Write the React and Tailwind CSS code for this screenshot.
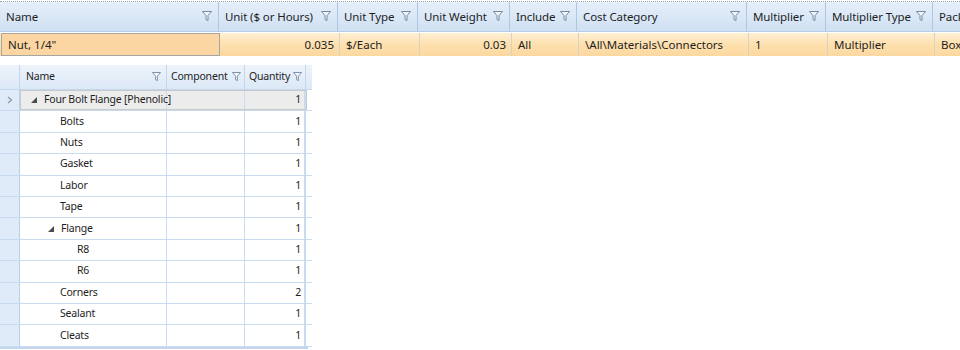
import React from 'react';

const Funnel = ({ small = false }) => (
  <svg width={small ? 9 : 10} height={small ? 10 : 11} viewBox="0 0 10 11" className="shrink-0">
    <path d="M0.5 0.5 H9.5 L6 4.5 V9.5 L4 8.5 V4.5 Z" fill="#f4f8fc" stroke="#7488a3" strokeWidth="1" strokeLinejoin="round" />
  </svg>
);

const Expander = () => (
  <svg width="6" height="6" viewBox="0 0 6 6">
    <polygon points="6,0 6,6 0,6" fill="#4a4a4a" />
  </svg>
);

const topCols = [
  { name: 'Name', w: 'w-[219px]', value: 'Nut, 1/4"' },
  { name: 'Unit ($ or Hours)', w: 'w-[119px]', value: '0.035', right: true },
  { name: 'Unit Type', w: 'w-[80px]', value: '$/Each' },
  { name: 'Unit Weight', w: 'w-[92px]', value: '0.03', right: true },
  { name: 'Include', w: 'w-[67px]', value: 'All' },
  { name: 'Cost Category', w: 'w-[170px]', value: '\\All\\Materials\\Connectors' },
  { name: 'Multiplier', w: 'w-[79px]', value: '1' },
  { name: 'Multiplier Type', w: 'w-[107px]', value: 'Multiplier' },
  { name: 'Package', w: 'w-[27px]', value: 'Box', noFilter: true },
];

const treeRows = [
  { name: 'Four Bolt Flange [Phenolic]', level: 0, expander: true, qty: 1, current: true },
  { name: 'Bolts', level: 1, qty: 1 },
  { name: 'Nuts', level: 1, qty: 1 },
  { name: 'Gasket', level: 1, qty: 1 },
  { name: 'Labor', level: 1, qty: 1 },
  { name: 'Tape', level: 1, qty: 1 },
  { name: 'Flange', level: 1, expander: true, qty: 1 },
  { name: 'R8', level: 2, qty: 1 },
  { name: 'R6', level: 2, qty: 1 },
  { name: 'Corners', level: 1, qty: 2 },
  { name: 'Sealant', level: 1, qty: 1 },
  { name: 'Cleats', level: 1, qty: 1 },
];

const indent = ['pl-[23px]', 'pl-[40px]', 'pl-[57px]'];
const expIndent = ['pl-[11px]', 'pl-[28px]', 'pl-[45px]'];

export default function App() {
  return (
    <div className="w-[960px] h-[350px] bg-white overflow-hidden text-[#1e1e1e]" style={{ fontFamily: '"Noto Sans", "Open Sans", sans-serif' }}>
      {/* Top grid */}
      <div className="border-t border-dotted border-[#9aa4b0] mt-[1px]">
        <div className="flex h-[30px] bg-gradient-to-b from-[#e6effa] to-[#cfe0f2] border-b border-[#b7cce6] text-[11.5px] tracking-[-0.1px] whitespace-nowrap">
          {topCols.map((c) => (
            <div key={c.name} className={`${c.w} shrink-0 flex items-center justify-between pl-[6px] pr-[6px] ${c.noFilter ? '' : 'border-r border-[#aec6e2]'} overflow-hidden`}>
              <span>{c.name}</span>
              {!c.noFilter && <Funnel />}
            </div>
          ))}
        </div>
        <div className="flex h-[23px] mt-[1px] bg-gradient-to-b from-[#fff0d4] via-[#fde0ae] to-[#fcd8a0] text-[11.5px] whitespace-nowrap">
          {topCols.map((c, i) => (
            <div
              key={c.name}
              className={`${c.w} shrink-0 flex items-center ${c.right ? 'justify-end pr-[5px]' : 'pl-[6px]'} ${i === 0 ? 'border border-[#a6a6a6] bg-[#fcd6a2] mx-[1px]' : 'border-r border-[#d9d2c4]'} overflow-hidden`}
            >
              {c.value}
            </div>
          ))}
        </div>
      </div>

      {/* Tree grid */}
      <div className="mt-[9px] w-[312px] text-[10.5px] tracking-[-0.2px] whitespace-nowrap">
        <div className="flex h-[25px] bg-gradient-to-b from-[#eef4fb] to-[#dbe8f6] border-b border-[#c3d6ee]">
          <div className="w-[20px] shrink-0 border-r border-[#c3d6ee]" />
          <div className="w-[147px] shrink-0 flex items-center justify-between pl-[6px] pr-[5px] border-r border-[#c3d6ee]">
            <span>Name</span>
            <Funnel small />
          </div>
          <div className="w-[78px] shrink-0 flex items-center justify-between pl-[4px] pr-[3px] border-r border-[#c3d6ee]">
            <span>Component</span>
            <Funnel small />
          </div>
          <div className="w-[61px] shrink-0 flex items-center justify-between pl-[4px] pr-[3px] border-r border-[#c3d6ee]">
            <span>Quantity</span>
            <Funnel small />
          </div>
          <div className="flex-1" />
        </div>
        {treeRows.map((r) => (
          <div key={r.name} className="flex h-[21.4px] border-b border-[#c8dbf1]">
            <div className="w-[20px] shrink-0 bg-[#dfebf8] border-r border-[#b9cfea] flex items-center justify-center">
              {r.current && (
                <svg width="6" height="8" viewBox="0 0 6 8">
                  <path d="M1 1 L4.5 4 L1 7" fill="none" stroke="#8696ab" strokeWidth="1.2" />
                </svg>
              )}
            </div>
            <div className={`flex flex-1 ${r.current ? 'bg-[#ececec] outline outline-1 -outline-offset-1 outline-[#c9c9c9]' : ''}`}>
              <div className={`w-[147px] shrink-0 flex items-center border-r border-[#c8dbf1] ${r.expander ? expIndent[r.level] : indent[r.level]}`}>
                {r.expander && (
                  <span className="mr-[7px] flex items-center">
                    <Expander />
                  </span>
                )}
                <span>{r.name}</span>
              </div>
              <div className="w-[78px] shrink-0 border-r border-[#c8dbf1]" />
              <div className="w-[61px] shrink-0 flex items-center justify-end pr-[3px] border-r-2 border-[#c8dbf1]">
                {r.qty}
              </div>
            </div>
            <div className="w-[5px] shrink-0" />
          </div>
        ))}
        <div className="h-[2px] bg-[#c3d6ee] w-[308px]" />
      </div>
    </div>
  );
}
